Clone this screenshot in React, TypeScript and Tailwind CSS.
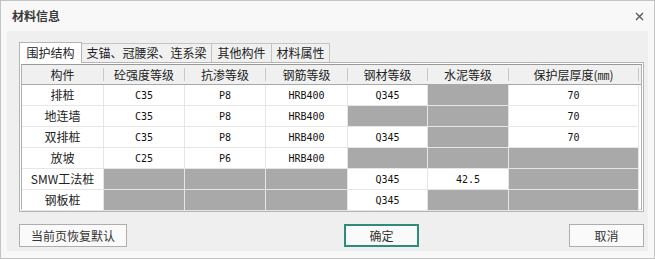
import React from "react";

const cjk = { fontFamily: '"Noto Sans CJK SC", "Noto Sans", sans-serif' };

const colW = ["w-[82px]", "w-[81px]", "w-[81px]", "w-[82px]", "w-[80px]", "w-[81px]", "w-[130px]"];

const headers = ["构件", "砼强度等级", "抗渗等级", "钢筋等级", "钢材等级", "水泥等级", "保护层厚度(㎜)"];

type Cell = string | null;
const rows: Cell[][] = [
  ["排桩", "C35", "P8", "HRB400", "Q345", null, "70"],
  ["地连墙", "C35", "P8", "HRB400", null, null, "70"],
  ["双排桩", "C35", "P8", "HRB400", "Q345", null, "70"],
  ["放坡", "C25", "P6", "HRB400", null, null, null],
  ["SMW工法桩", null, null, null, "Q345", "42.5", null],
  ["钢板桩", null, null, null, "Q345", null, null],
];

function Tab({ label, active, w }: { label: string; active?: boolean; w: string }) {
  return active ? (
    <div className={`${w} h-[21px] -mb-px bg-white border border-b-0 border-[#b4b4b4] flex items-center justify-center text-[12px] text-[#222] relative z-10`}>
      {label}
    </div>
  ) : (
    <div className={`${w} h-[19px] bg-[#f0f0f0] border border-l-0 border-b-0 border-[#c4c4c4] flex items-center justify-center text-[12px] text-[#222]`}>
      {label}
    </div>
  );
}

export default function App() {
  return (
    <div className="w-[655px] h-[259px] border border-[#c4c4c4] bg-[#f8f8f8] flex flex-col select-none" style={cjk}>
      <div className="h-[30px] flex items-center justify-between pl-[11px] pr-[10px] shrink-0">
        <span className="text-[12px] font-bold text-[#3a3a3a]">材料信息</span>
        <svg width="9" height="9" viewBox="0 0 9 9" className="mt-[1px]">
          <path d="M1 1 L8 8 M8 1 L1 8" stroke="#555" strokeWidth="1.3" />
        </svg>
      </div>
      <div className="mx-[6px] h-[220px] bg-[#efefef] flex flex-col pl-[12px] pr-[3px] pt-[11px]">
        <div className="flex items-end h-[20px]">
          <Tab label="围护结构" active w="w-[63px]" />
          <Tab label="支锚、冠腰梁、连系梁" w="w-[130px]" />
          <Tab label="其他构件" w="w-[60px]" />
          <Tab label="材料属性" w="w-[58px]" />
        </div>
        <div className="w-[625px] h-[150px] border border-[#b4b4b4] bg-white p-px">
          <div className="h-full border border-t-[#999] border-x-[#b0b0b0] border-b-[#cfcfcf] bg-white flex flex-col">
            <div className="h-[20px] bg-[#f0f0f0] border-b border-[#a8a8a8] flex items-center shrink-0">
              {headers.map((h, i) => (
                <div key={i} className={`${colW[i]} h-full flex items-center`}>
                  <div className="flex-1 text-center text-[12px] text-[#222]">{h}</div>
                  <div className="w-px h-[13px] bg-[#c8c8c8]" />
                </div>
              ))}
            </div>
            {rows.map((r, ri) => (
              <div key={ri} className="h-[21px] flex shrink-0">
                {r.map((c, ci) => (
                  <div
                    key={ci}
                    className={`${colW[ci]} h-full border-r border-b border-[#e6e6e6] flex items-center justify-center ${
                      c === null ? "bg-[#a9a9a9]" : "bg-white"
                    }`}
                  >
                    {c !== null &&
                      (ci === 0 ? (
                        <span className="text-[12px] text-[#222]">{c}</span>
                      ) : (
                        <span className="text-[10px] text-[#111]" style={{ fontFamily: '"DejaVu Sans Mono", monospace' }}>
                          {c}
                        </span>
                      ))}
                  </div>
                ))}
              </div>
            ))}
          </div>
        </div>
        <div className="flex items-center mt-[12px]">
          <button className="w-[108px] h-[23px] bg-[#fafafa] border border-[#adadad] text-[12px] text-[#333] flex items-center justify-center">
            当前页恢复默认
          </button>
          <button className="ml-[217px] w-[75px] h-[23px] bg-[#fafafa] border-2 border-[#2f8c7b] text-[12px] text-[#333] flex items-center justify-center">
            确定
          </button>
          <button className="ml-[150px] w-[75px] h-[23px] bg-[#fafafa] border border-[#adadad] text-[12px] text-[#333] flex items-center justify-center">
            取消
          </button>
        </div>
      </div>
    </div>
  );
}
